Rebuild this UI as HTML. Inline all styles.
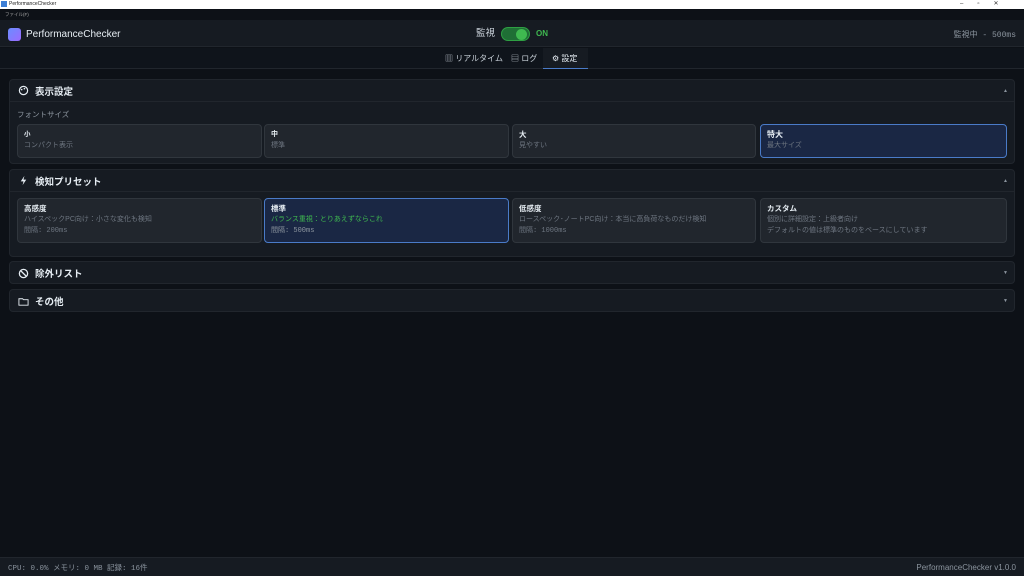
<!DOCTYPE html>
<html><head><meta charset="utf-8"><style>
*{box-sizing:border-box;margin:0;padding:0}
body{width:1024px;height:576px;overflow:hidden;background:#0d1117;font-family:"Liberation Sans","Noto Sans CJK JP",sans-serif;color:#e6edf3;position:relative}
.abs{position:absolute}
.mono{font-family:"Liberation Mono","Noto Sans CJK JP",monospace}
.sec{position:absolute;left:9px;width:1006px;background:#161b22;border:1px solid #21262d;border-radius:4px}
.sh{height:22px;display:flex;align-items:center;padding-left:8px;font-size:9.5px;font-weight:bold;position:relative}
.sh svg{margin-right:6px}
.arr{position:absolute;right:6px;font-size:5px;color:#8b949e}
.card{position:absolute;background:#21262d;border:1px solid #30363d;border-radius:4px;padding:4px 6px;font-size:7px;color:#6e7681;line-height:11px}
.card b{color:#e6edf3;font-size:7.5px;display:block}
.sel{background:#1a2744;border:1px solid #4a7bc8}
</style></head><body>
<div class="abs" style="left:0;top:0;width:1024px;height:9px;background:#fff;font-size:5px;color:#222;line-height:9px;padding-left:9px">PerformanceChecker</div>
<div class="abs" style="left:1px;top:1px;width:6px;height:6px;background:#3d7fd6"></div>
<div class="abs" style="left:960px;top:0;font-size:6px;color:#333;line-height:9px;letter-spacing:14px">–▫✕</div>
<div class="abs" style="left:0;top:9px;width:1024px;height:11px;background:#0d1117;font-size:4.5px;color:#aaa;padding:3px 5px">ファイル(F)</div>
<div class="abs" style="left:0;top:20px;width:1024px;height:27px;background:#161b22;border-bottom:1px solid #21262d"></div>
<div class="abs" style="left:8px;top:28px;width:13px;height:13px;border-radius:3px;background:linear-gradient(135deg,#6a8dff,#9b6bff)"></div>
<div class="abs" style="left:26px;top:28px;font-size:10px;line-height:13px">PerformanceChecker</div>
<div class="abs" style="left:476px;top:28px;font-size:9.5px;color:#c9d1d9;line-height:12px">監視</div>
<div class="abs" style="left:501px;top:27px;width:29px;height:14px;border-radius:7px;background:#1f6f35;border:1px solid #2ea043"></div>
<div class="abs" style="left:516px;top:29px;width:11px;height:11px;border-radius:50%;background:#3fb950"></div>
<div class="abs" style="left:536px;top:29px;font-size:8px;font-weight:bold;color:#3fb950">ON</div>
<div class="abs mono" style="right:8px;top:29px;font-size:8px;color:#8b949e">監視中 - 500ms</div>
<div class="abs" style="left:0;top:48px;width:1024px;height:21px;background:#0f141b;border-bottom:1px solid #21262d"></div>
<div class="abs" style="left:445px;top:53px;font-size:8px;color:#c9d1d9">▥ リアルタイム</div>
<div class="abs" style="left:511px;top:53px;font-size:8px;color:#c9d1d9">▤ ログ</div>
<div class="abs" style="left:543px;top:48px;width:45px;height:21px;background:#161b22;border-bottom:1px solid #4a7bc8"></div>
<div class="abs" style="left:552px;top:53px;font-size:8px;color:#e6edf3">⚙ 設定</div>

<div class="sec" style="top:79px;height:85px">
<div class="sh" style="border-bottom:1px solid #21262d"><svg width="11" height="11" viewBox="0 0 12 12"><circle cx="6" cy="6" r="4.5" fill="none" stroke="#e6edf3" stroke-width="1.3"/><circle cx="4" cy="5" r=".9" fill="#e6edf3"/><circle cx="7" cy="4" r=".9" fill="#e6edf3"/></svg>表示設定<span class="arr">▲</span></div>
<div class="abs" style="left:7px;top:29px;font-size:7.5px;color:#8b949e">フォントサイズ</div>
<div class="card" style="left:7px;top:44px;width:245px;height:34px"><b style="font-size:6.5px">小</b>コンパクト表示</div>
<div class="card" style="left:254px;top:44px;width:245px;height:34px"><b style="font-size:7px">中</b>標準</div>
<div class="card" style="left:502px;top:44px;width:244px;height:34px"><b>大</b>見やすい</div>
<div class="card sel" style="left:750px;top:44px;width:247px;height:34px"><b style="font-size:8px">特大</b>最大サイズ</div>
</div>

<div class="sec" style="top:169px;height:88px">
<div class="sh" style="border-bottom:1px solid #21262d"><svg width="11" height="11" viewBox="0 0 12 12"><path d="M7 1L3 7h3l-1 4 4-6H6z" fill="#e6edf3"/></svg>検知プリセット<span class="arr">▲</span></div>
<div class="card" style="left:7px;top:28px;width:245px;height:45px"><b>高感度</b>ハイスペックPC向け：小さな変化も検知<br><span class="mono">間隔: 200ms</span></div>
<div class="card sel" style="left:254px;top:28px;width:245px;height:45px"><b>標準</b><span style="color:#3fb950">バランス重視：とりあえずならこれ</span><br><span class="mono" style="color:#8b949e">間隔: 500ms</span></div>
<div class="card" style="left:502px;top:28px;width:244px;height:45px"><b>低感度</b>ロースペック･ノートPC向け：本当に高負荷なものだけ検知<br><span class="mono">間隔: 1000ms</span></div>
<div class="card" style="left:750px;top:28px;width:247px;height:45px"><b>カスタム</b>個別に詳細設定：上級者向け<br>デフォルトの値は標準のものをベースにしています</div>
</div>

<div class="sec" style="top:261px;height:23px"><div class="sh"><svg width="11" height="11" viewBox="0 0 12 12"><circle cx="6" cy="6" r="4.5" fill="none" stroke="#e6edf3" stroke-width="1.4"/><path d="M3 3l6 6" stroke="#e6edf3" stroke-width="1.4"/></svg>除外リスト<span class="arr">▼</span></div></div>
<div class="sec" style="top:289px;height:23px"><div class="sh"><svg width="11" height="11" viewBox="0 0 12 12"><path d="M1 3h4l1 1h5v6H1z" fill="none" stroke="#e6edf3" stroke-width="1"/></svg>その他<span class="arr">▼</span></div></div>

<div class="abs" style="left:0;top:557px;width:1024px;height:19px;background:#161b22;border-top:1px solid #21262d"></div>
<div class="abs mono" style="left:8px;top:562px;font-size:7.5px;color:#8b949e">CPU: 0.0%  メモリ: 0 MB  記録: 16件</div>
<div class="abs" style="right:8px;top:563px;font-size:8px;color:#8b949e">PerformanceChecker v1.0.0</div>
</body></html>
